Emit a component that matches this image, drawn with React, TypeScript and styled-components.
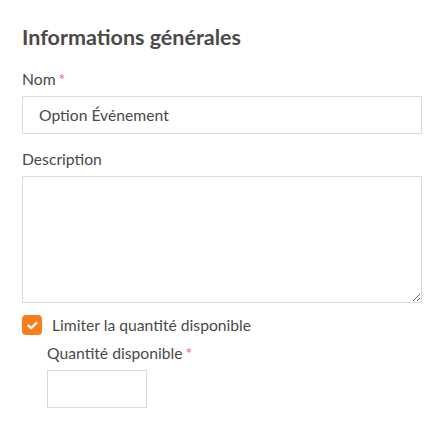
import React, { useState } from 'react';
import styled, { createGlobalStyle } from 'styled-components';

const GlobalStyle = createGlobalStyle`
  html, body {
    margin: 0;
    padding: 0;
    background: #ffffff;
  }
  body {
    font-family: 'Lato', 'Open Sans', sans-serif;
    color: #4a4a4a;
  }
  * { box-sizing: border-box; }
`;

const Form = styled.form`
  display: flex;
  flex-direction: column;
  padding: 24px 25px 0 22px;
  width: 447px;
`;

const Title = styled.h2`
  margin: 0 0 19px;
  font-size: 21.5px;
  font-weight: 700;
  color: #4a4a4a;
  line-height: 26px;
`;

const Field = styled.div<{ indent?: number }>`
  display: flex;
  flex-direction: column;
  margin-left: ${({ indent }) => indent || 0}px;
  margin-bottom: 15px;
`;

const Label = styled.label`
  font-size: 15.7px;
  line-height: 20px;
  color: #4a4a4a;
  margin-bottom: 7px;
`;

const Required = styled.span`
  color: #ff5a6e;
  margin-left: 3px;
`;

const TextInput = styled.input<{ w?: number }>`
  width: ${({ w }) => (w ? `${w}px` : '100%')};
  height: 38px;
  border: 1px solid #d5dce8;
  border-radius: 0;
  padding: 0 16px;
  font-family: inherit;
  font-size: 15.7px;
  color: #4a4a4a;
  outline: none;
`;

const TextArea = styled.textarea`
  width: 100%;
  height: 127px;
  border: 1px solid #d5dce8;
  border-radius: 0;
  padding: 10px 16px;
  font-family: inherit;
  font-size: 15.7px;
  color: #4a4a4a;
  outline: none;
  display: block;
`;

const CheckRow = styled.label`
  display: flex;
  align-items: center;
  gap: 10px;
  margin: -3px 0 8px;
  font-size: 15.7px;
  line-height: 20px;
  color: #4a4a4a;
  cursor: pointer;
`;

const Box = styled.span<{ checked: boolean }>`
  width: 20px;
  height: 20px;
  border-radius: 4px;
  background: ${({ checked }) => (checked ? '#f97d1c' : '#ffffff')};
  border: ${({ checked }) => (checked ? 'none' : '1px solid #d5dce8')};
  display: flex;
  align-items: center;
  justify-content: center;
`;

export default function App() {
  const [limit, setLimit] = useState(true);
  const [name, setName] = useState('Option Événement');

  return (
    <>
      <GlobalStyle />
      <Form onSubmit={(e) => e.preventDefault()}>
        <Title>Informations générales</Title>
        <Field>
          <Label>
            Nom<Required>*</Required>
          </Label>
          <TextInput value={name} onChange={(e) => setName(e.target.value)} />
        </Field>
        <Field>
          <Label>Description</Label>
          <TextArea />
        </Field>
        <CheckRow onClick={() => setLimit(!limit)}>
          <Box checked={limit}>
            {limit && (
              <svg width="11" height="9" viewBox="0 0 11 9">
                <path d="M1.5 4.6 L4.2 7.2 L9.5 1.8" fill="none" stroke="#fff" strokeWidth="2.2" strokeLinecap="round" strokeLinejoin="round" />
              </svg>
            )}
          </Box>
          Limiter la quantité disponible
        </CheckRow>
        {limit && (
          <Field indent={25}>
            <Label>
              Quantité disponible<Required>*</Required>
            </Label>
            <TextInput w={100} />
          </Field>
        )}
      </Form>
    </>
  );
}
